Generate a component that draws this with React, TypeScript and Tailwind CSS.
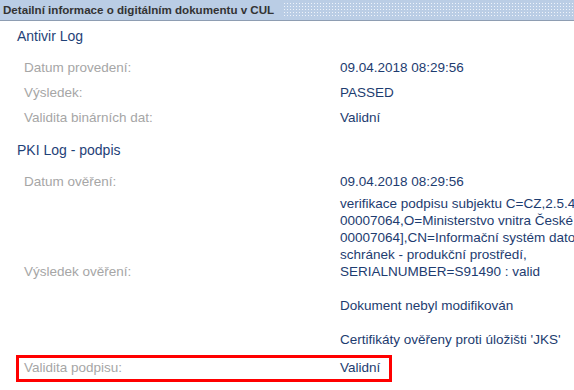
import type { ReactNode } from 'react'

const LONG_LINES = [
  'verifikace podpisu subjektu C=CZ,2.5.4.97=NTRCZ-',
  '00007064,O=Ministerstvo vnitra České republiky [IČ',
  '00007064],CN=Informační systém datových',
  'schránek - produkční prostředí,',
  'SERIALNUMBER=S91490 : valid',
  '',
  'Dokument nebyl modifikován',
  '',
  "Certifikáty ověřeny proti úložišti 'JKS'",
]

function SectionTitle({ children }: { children: ReactNode }) {
  return <div className="h-[30px] flex items-center pl-[17px] text-[14px] text-[#1f4278]">{children}</div>
}

function Row({ label, value }: { label: string; value: ReactNode }) {
  return (
    <div className="h-[25px] pl-[24px] grid grid-cols-[316px_1fr] items-center whitespace-nowrap">
      <span className="text-[#a6a6a6]">{label}</span>
      <span className="text-[#1d3c70]">{value}</span>
    </div>
  )
}

export default function App() {
  return (
    <div className="w-[574px] h-[390px] overflow-hidden bg-white text-[13.5px] font-['Liberation_Sans',Arial,sans-serif]">
      {/* Title bar */}
      <div className="h-[21px] flex items-center bg-[#bacde5] border-b border-[#8e9db2]">
        <span className="pl-[3px] pr-[9px] text-[11.6px] font-bold text-[#333] whitespace-nowrap">
          Detailní informace o digitálním dokumentu v CUL
        </span>
        <div className="flex-1 h-[16px] bg-[radial-gradient(#eef3fa_0.8px,transparent_0.9px)] bg-[length:3px_3px]" />
      </div>

      <SectionTitle>Antivir Log</SectionTitle>
      <div className="mt-[5px]">
        <Row label="Datum provedení:" value="09.04.2018 08:29:56" />
        <Row label="Výsledek:" value="PASSED" />
        <Row label="Validita binárních dat:" value="Validní" />
      </div>

      <div className="mt-[4px]">
        <SectionTitle>PKI Log - podpis</SectionTitle>
      </div>
      <div className="mt-[5px]">
        <Row label="Datum ověření:" value="09.04.2018 08:29:56" />
        <div className="pl-[24px] grid grid-cols-[316px_1fr] items-center whitespace-nowrap">
          <span className="text-[#a6a6a6]">Výsledek ověření:</span>
          <div className="text-[#1d3c70] leading-[17px] pb-[1px]">
            {LONG_LINES.map((line, i) => (
              <div key={i} className="h-[17px]">{line}</div>
            ))}
          </div>
        </div>
      </div>

      {/* Highlighted row */}
      <div className="mt-[6px] ml-[16px] w-[376px] h-[27px] border-[3px] border-[#ff0000] pl-[5px] grid grid-cols-[316px_1fr] items-center whitespace-nowrap">
        <span className="text-[#a6a6a6]">Validita podpisu:</span>
        <span className="text-[#1d3c70]">Validní</span>
      </div>
    </div>
  )
}
